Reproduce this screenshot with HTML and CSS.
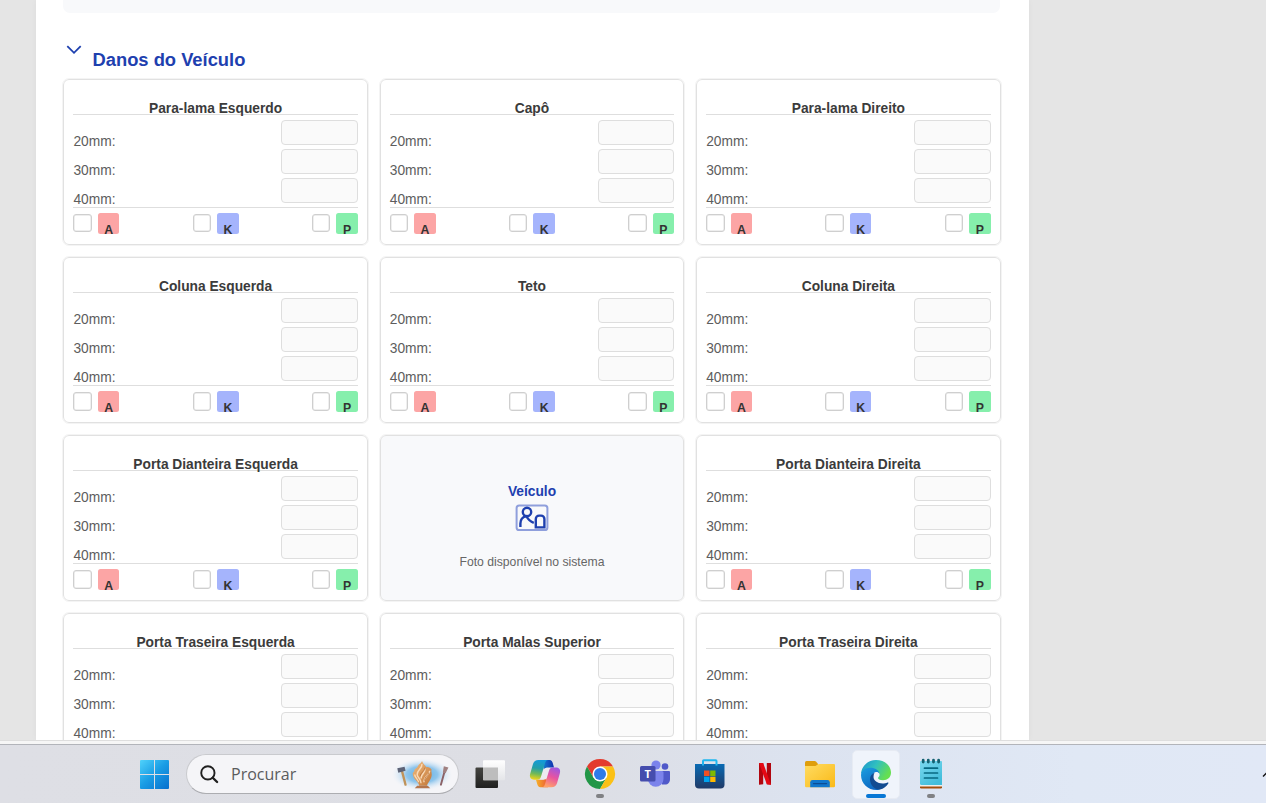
FILE: index.html
```html
<!DOCTYPE html>
<html lang="pt-BR">
<head>
<meta charset="utf-8">
<title>Danos do Veículo</title>
<link rel="stylesheet" href="styles.css">
</head>
<body>
<div class="screen">
  <div class="viewport">
    <main class="sheet">
      <div class="previous-panel"></div>
      <header class="section-head">
        <svg class="chevron" viewBox="0 0 16 10"><path d="M1.3 1.2 8 7.8 14.7 1.2"/></svg>
        <h2>Danos do Veículo</h2>
      </header>
      <div class="grid">
        <section class="card">
          <h3>Para-lama Esquerdo</h3>
          <div class="rows">
            <div class="row"><label>20mm:</label><span class="field"></span></div>
            <div class="row"><label>30mm:</label><span class="field"></span></div>
            <div class="row"><label>40mm:</label><span class="field"></span></div>
          </div>
          <div class="flags">
            <span class="flag"><i class="check"></i><b class="tag a">A</b></span>
            <span class="flag"><i class="check"></i><b class="tag k">K</b></span>
            <span class="flag"><i class="check"></i><b class="tag p">P</b></span>
          </div>
        </section>
        <section class="card">
          <h3>Capô</h3>
          <div class="rows">
            <div class="row"><label>20mm:</label><span class="field"></span></div>
            <div class="row"><label>30mm:</label><span class="field"></span></div>
            <div class="row"><label>40mm:</label><span class="field"></span></div>
          </div>
          <div class="flags">
            <span class="flag"><i class="check"></i><b class="tag a">A</b></span>
            <span class="flag"><i class="check"></i><b class="tag k">K</b></span>
            <span class="flag"><i class="check"></i><b class="tag p">P</b></span>
          </div>
        </section>
        <section class="card">
          <h3>Para-lama Direito</h3>
          <div class="rows">
            <div class="row"><label>20mm:</label><span class="field"></span></div>
            <div class="row"><label>30mm:</label><span class="field"></span></div>
            <div class="row"><label>40mm:</label><span class="field"></span></div>
          </div>
          <div class="flags">
            <span class="flag"><i class="check"></i><b class="tag a">A</b></span>
            <span class="flag"><i class="check"></i><b class="tag k">K</b></span>
            <span class="flag"><i class="check"></i><b class="tag p">P</b></span>
          </div>
        </section>
        <section class="card">
          <h3>Coluna Esquerda</h3>
          <div class="rows">
            <div class="row"><label>20mm:</label><span class="field"></span></div>
            <div class="row"><label>30mm:</label><span class="field"></span></div>
            <div class="row"><label>40mm:</label><span class="field"></span></div>
          </div>
          <div class="flags">
            <span class="flag"><i class="check"></i><b class="tag a">A</b></span>
            <span class="flag"><i class="check"></i><b class="tag k">K</b></span>
            <span class="flag"><i class="check"></i><b class="tag p">P</b></span>
          </div>
        </section>
        <section class="card">
          <h3>Teto</h3>
          <div class="rows">
            <div class="row"><label>20mm:</label><span class="field"></span></div>
            <div class="row"><label>30mm:</label><span class="field"></span></div>
            <div class="row"><label>40mm:</label><span class="field"></span></div>
          </div>
          <div class="flags">
            <span class="flag"><i class="check"></i><b class="tag a">A</b></span>
            <span class="flag"><i class="check"></i><b class="tag k">K</b></span>
            <span class="flag"><i class="check"></i><b class="tag p">P</b></span>
          </div>
        </section>
        <section class="card">
          <h3>Coluna Direita</h3>
          <div class="rows">
            <div class="row"><label>20mm:</label><span class="field"></span></div>
            <div class="row"><label>30mm:</label><span class="field"></span></div>
            <div class="row"><label>40mm:</label><span class="field"></span></div>
          </div>
          <div class="flags">
            <span class="flag"><i class="check"></i><b class="tag a">A</b></span>
            <span class="flag"><i class="check"></i><b class="tag k">K</b></span>
            <span class="flag"><i class="check"></i><b class="tag p">P</b></span>
          </div>
        </section>
        <section class="card">
          <h3>Porta Dianteira Esquerda</h3>
          <div class="rows">
            <div class="row"><label>20mm:</label><span class="field"></span></div>
            <div class="row"><label>30mm:</label><span class="field"></span></div>
            <div class="row"><label>40mm:</label><span class="field"></span></div>
          </div>
          <div class="flags">
            <span class="flag"><i class="check"></i><b class="tag a">A</b></span>
            <span class="flag"><i class="check"></i><b class="tag k">K</b></span>
            <span class="flag"><i class="check"></i><b class="tag p">P</b></span>
          </div>
        </section>
        <section class="card photo">
          <strong>Veículo</strong>
          <svg class="photo-icon" viewBox="0 0 34 28" fill="none" stroke="#1e40af">
            <rect x="1.6" y="1.400" width="30.800" height="24.600" rx="2.600" stroke="#8f9fdc" stroke-width="2"/>
            <g stroke-width="2.400">
              <circle cx="12" cy="8" r="4.200"/>
              <path d="M5.400 23v-3.400c0-4 2.300-6.600 6-7.400 1.700 3.200 4 5.400 7.400 6.600"/>
              <path d="M20.800 23.400v-8.400c0-2 1.500-3.400 3.300-3.400h2c1.800 0 3.300 1.400 3.300 3.400v8.400z"/>
            </g>
          </svg>
          <span>Foto disponível no sistema</span>
        </section>
        <section class="card">
          <h3>Porta Dianteira Direita</h3>
          <div class="rows">
            <div class="row"><label>20mm:</label><span class="field"></span></div>
            <div class="row"><label>30mm:</label><span class="field"></span></div>
            <div class="row"><label>40mm:</label><span class="field"></span></div>
          </div>
          <div class="flags">
            <span class="flag"><i class="check"></i><b class="tag a">A</b></span>
            <span class="flag"><i class="check"></i><b class="tag k">K</b></span>
            <span class="flag"><i class="check"></i><b class="tag p">P</b></span>
          </div>
        </section>
        <section class="card">
          <h3>Porta Traseira Esquerda</h3>
          <div class="rows">
            <div class="row"><label>20mm:</label><span class="field"></span></div>
            <div class="row"><label>30mm:</label><span class="field"></span></div>
            <div class="row"><label>40mm:</label><span class="field"></span></div>
          </div>
        </section>
        <section class="card">
          <h3>Porta Malas Superior</h3>
          <div class="rows">
            <div class="row"><label>20mm:</label><span class="field"></span></div>
            <div class="row"><label>30mm:</label><span class="field"></span></div>
            <div class="row"><label>40mm:</label><span class="field"></span></div>
          </div>
        </section>
        <section class="card">
          <h3>Porta Traseira Direita</h3>
          <div class="rows">
            <div class="row"><label>20mm:</label><span class="field"></span></div>
            <div class="row"><label>30mm:</label><span class="field"></span></div>
            <div class="row"><label>40mm:</label><span class="field"></span></div>
          </div>
        </section>
      </div>
    </main>
  </div>
  <div class="window-edge"></div>
  <nav class="taskbar">
    <svg class="start" viewBox="0 0 29 29">
      <defs><linearGradient id="win" gradientUnits="userSpaceOnUse" x1="0" y1="0" x2="27" y2="29"><stop offset="0" stop-color="#50d2fb"/><stop offset=".5" stop-color="#199de5"/><stop offset="1" stop-color="#0872cf"/></linearGradient></defs>
      <path fill="url(#win)" d="M1 0h13v14H0V1q0-1 1-1zM15 0h13q1 0 1 1v13H15zM0 15h14v14H1q-1 0-1-1zM15 15h14v13q0 1-1 1H15z"/>
    </svg>
    <div class="search">
      <svg class="lens" viewBox="0 0 20 20" fill="none" stroke="#202020"><circle cx="8.300" cy="8.300" r="7" stroke-width="2"/><path d="m13.400 13.400 4.600 4.500" stroke-width="2.500" stroke-linecap="round"/></svg>
      <span>Procurar</span>
      <svg class="highlight" viewBox="0 0 64 34">
        <defs>
          <radialGradient id="glow"><stop offset="0" stop-color="#5aabe2"/><stop offset=".5" stop-color="#8ec5ec"/><stop offset="1" stop-color="#f2f5fa" stop-opacity="0"/></radialGradient>
          <linearGradient id="wood" x2="1" y2="1"><stop offset="0" stop-color="#f3bd80"/><stop offset="1" stop-color="#c17636"/></linearGradient>
        </defs>
        <ellipse cx="32" cy="17" rx="32" ry="17" fill="url(#glow)"/>
        <path d="m11.500 14 3.500 13.500" stroke="#c0935a" stroke-width="2.400" stroke-linecap="round"/>
        <path d="m6.500 10.500 7.500-1.500 1 4-7.500 2.200z" fill="#5d6377"/>
        <path d="m55 15-3.500 12.500" stroke="#8b6267" stroke-width="2" stroke-linecap="round"/>
        <path d="m54.500 8.500 4.800 1.200-3 6-2.800-.8z" fill="#a08080"/>
        <path d="M32 3c1 3 3 4 4.500 6.500 2-.5 4 .500 5.500 2.500-1.200 2 1 4-.5 8-1.500 4-3.500 5.500-4.500 8.500h-8c0-3-3.500-5-5.500-8.500-1.500-3-1.500-5 .5-6-.5-2.500 2-3 3.500-5C28 6.500 31 6 32 3z" fill="url(#wood)"/>
        <path d="M32 6c.5 5-5 6-5 11 0 3 4 4 4 9m4-15c1 4-4 5-4 10m9-8c0 5-6 5-6 12M24.500 17c0 3 3 4 4 8" fill="none" stroke="#ffe9cd" stroke-width="1.500" stroke-opacity=".8"/>
        <path d="M35 10c0 4-5 5-5 9m9-4c0 3-5 4-4 9" fill="none" stroke="#b56b31" stroke-width=".8"/>
        <path d="M27 28.500h11l2.500 2.700H24.500z" fill="#b4754c"/>
      </svg>
    </div>
    <div class="apps">
      <span class="app">
        <svg width="32" height="32" viewBox="0 0 32 32">
          <defs><linearGradient id="dk" x2="0" y2="1"><stop offset="0" stop-color="#444440"/><stop offset="1" stop-color="#202020"/></linearGradient><linearGradient id="lt" x2="0" y2="1"><stop offset="0" stop-color="#fff"/><stop offset="1" stop-color="#e4e5e8"/></linearGradient></defs>
          <rect x="1.500" y="9.500" width="22.500" height="20.500" rx="1" fill="url(#dk)"/>
          <rect x="9" y="2.200" width="22" height="20" rx="1" fill="url(#lt)"/>
          <path d="M9 9.500h15v12.700H9z" fill="#bdbdbd"/>
        </svg>
      </span>
      <span class="app">
        <svg width="32" height="32" viewBox="0 0 32 32">
          <defs>
            <linearGradient id="cp1" x1=".4" x2=".25" y2="1"><stop offset="0" stop-color="#149ad8"/><stop offset=".4" stop-color="#239fa8"/><stop offset=".7" stop-color="#72b957"/><stop offset="1" stop-color="#f4d516"/></linearGradient>
            <linearGradient id="cp2" x1=".8" x2=".4" y2="1"><stop offset="0" stop-color="#9a58e4"/><stop offset=".5" stop-color="#e854a0"/><stop offset="1" stop-color="#ffa269"/></linearGradient>
            <linearGradient id="cp3" x2="1"><stop offset="0" stop-color="#1784d3"/><stop offset="1" stop-color="#102fae"/></linearGradient>
            <linearGradient id="cp4" x2="1"><stop offset="0" stop-color="#f6b328"/><stop offset="1" stop-color="#ec5935"/></linearGradient>
          </defs>
          <path d="M13 2h7.500c2 0 2.800 1.500 3.300 3.200l1.200 4.300h-7.500L15 12z" fill="url(#cp3)"/>
          <path d="M19 29.200h-7.500c-2 0-2.800-1.500-3.300-3.200L7 21.700h7.500L17 19z" fill="url(#cp4)"/>
          <path d="M18 10h3l-2.700 9c-.5 1.700-1.300 2.500-2.800 2.500H11l3.200-9.300c.6-1.600 1.600-2.200 3.800-2.200z" fill="#eceaf0"/>
          <path d="M9.500 2H19c-1.700 0-2.500 1.500-3 3.200L12 18.500c-.7 2.200-1.800 3.200-4 3.200H5c-3.500 0-4.800-2.500-3.800-6L4 6c.9-2.700 2.600-4 5.500-4z" fill="url(#cp1)"/>
          <path d="M22.500 29.200H13c1.700 0 2.500-1.500 3-3.200l4-13.300c.7-2.200 1.800-3.200 4-3.200h3c3.500 0 4.800 2.500 3.800 6L28 25.200c-.9 2.700-2.600 4-5.500 4z" fill="url(#cp2)"/>
        </svg>
      </span>
      <span class="app running">
        <svg width="32" height="32" viewBox="-16 -16 32 32">
          <path d="M0-7.500h13A15 15 0 0 0-13-7.500L-6.500 3.750z" fill="#e33b2e"/>
          <path d="M-6.500 3.750-13-7.500A15 15 0 0 0 0 15L6.500 3.750z" fill="#229647"/>
          <path d="M6.500 3.750 0 15A15 15 0 0 0 13-7.500H0z" fill="#fbc116"/>
          <circle r="7.500" fill="#fff"/><circle r="6" fill="#2f7bea"/>
        </svg>
      </span>
      <span class="app">
        <svg width="32" height="32" viewBox="0 0 32 32">
          <circle cx="17" cy="7" r="4.600" fill="#7b83eb"/><circle cx="26" cy="8.500" r="3.300" fill="#5059c9"/>
          <path d="M21 13h9q1 0 1 1v7c0 3.500-2 5.500-5 5.500h-3z" fill="#5059c9"/>
          <path d="M9 13h14q1.500 0 1.500 1.500V21a7.700 7.700 0 0 1-15.500 0z" fill="#7b83eb"/>
          <rect x="1" y="8" width="15.500" height="15.500" rx="1.500" fill="#454dad"/>
          <text x="8.700" y="19.600" class="teams-letter">T</text>
        </svg>
      </span>
      <span class="app">
        <svg width="32" height="32" viewBox="0 0 32 32">
          <defs><linearGradient id="st" x2="0" y2="1"><stop offset="0" stop-color="#096bb4"/><stop offset="1" stop-color="#203a67"/></linearGradient></defs>
          <path d="M1 6h29.500v20.500q0 4-4 4H5q-4 0-4-4z" fill="url(#st)"/>
          <path d="M9 7.500V3q0-.8.8-.8h11.900q.8 0 .8.800v4.500" fill="none" stroke="#20b7ef" stroke-width="2"/>
          <path d="M10 12.500h5.500V18H10z" fill="#f25022"/><path d="M16.200 12.500h5.300V18h-5.300z" fill="#7fba00"/><path d="M10 18.700h5.500V24H10z" fill="#00a4ef"/><path d="M16.200 18.700h5.300V24h-5.300z" fill="#ffb900"/>
        </svg>
      </span>
      <span class="app">
        <svg width="32" height="32" viewBox="0 0 32 32">
          <path d="M10 5h4.200v21.300l-4.200.5zM17.800 5H22v21.800l-4.200-.5z" fill="#b1060f"/>
          <path d="M10 5h4.200L22 26.800l-4.200-.5z" fill="#e50914"/>
        </svg>
      </span>
      <span class="app">
        <svg width="32" height="32" viewBox="0 0 32 32">
          <defs><linearGradient id="fo" x2="1" y2="1"><stop offset="0" stop-color="#ffdc62"/><stop offset="1" stop-color="#fab917"/></linearGradient></defs>
          <path d="M1 9V4.500Q1 3 2.500 3h8q1 0 1.700.8L14 5.900V9z" fill="#df9e0b"/>
          <path d="M1 8h9.500q1 0 1.800-.6l1.300-.9q.6-.5 1.500-.5H30q1 0 1 1V28q0 1.300-1.200 1.300H2.200Q1 29.300 1 28z" fill="url(#fo)"/>
          <path d="M6.200 29.300v-5q0-2.300 2.300-2.300h15q2.300 0 2.300 2.300v5z" fill="#1077cd"/>
          <path d="M9.500 25.600h13" stroke="#0b4c94" stroke-width="1.300" stroke-linecap="round"/>
        </svg>
      </span>
      <span class="app active">
        <svg width="32" height="32" viewBox="0 0 32 32">
          <defs>
            <linearGradient id="e1" x2="1" y2=".45"><stop offset="0" stop-color="#1b91ce"/><stop offset=".5" stop-color="#30bfc0"/><stop offset="1" stop-color="#65df51"/></linearGradient>
            <linearGradient id="e2" x2=".5" y2="1"><stop offset="0" stop-color="#1b9ee0"/><stop offset="1" stop-color="#0e68c2"/></linearGradient>
          </defs>
          <path d="M1 15C1.500 7 8 1 16 1c9 0 15 6 15 12.500 0 5-3.600 7.700-8 7.700-3.400 0-5-1-5-2.200 0-1 1.600-1.300 1.600-3.300 0-2.200-2.200-4.200-5.600-4.200-6 0-11 .5-13 3.500z" fill="url(#e1)"/>
          <path d="M1 16c.3-5 5.200-7.800 10.500-7.300 4.200.3 7.500 3 8 6-.9-1.300-2.200-2-3.500-1.700-2.500.5-4.500 3.500-4.500 6.500 0 5.500 4.500 10.500 9 11.200-1.200.3-2.500.4-4 .4-8.500 0-15.500-6.700-15.500-15.100z" fill="url(#e2)"/>
          <path d="M14.500 13.800c-2.800 1-4.500 3.500-4.500 6.500 0 6 4.800 10.700 10 10.300 3.500-.8 6.700-3.300 8.300-6.100.4-.8-.2-1.200-.9-.9-1.200.6-3 1-4.900 1-5 0-9-3-9-6.500 0-1.500.3-2.900 1-4.300z" fill="#124b91"/>
        </svg>
      </span>
      <span class="app running">
        <svg width="32" height="32" viewBox="0 0 32 32">
          <defs><linearGradient id="np" x2=".6" y2="1"><stop offset="0" stop-color="#7cd9ef"/><stop offset="1" stop-color="#42bddb"/></linearGradient></defs>
          <path d="M5 25h22v4.200q0 1.300-1.300 1.300H6.300Q5 30.500 5 29.200z" fill="#a34e0c"/>
          <path d="M5 25h22v3.500H5z" fill="#f1eee9"/>
          <path d="M6 3h20q1 0 1 1v23H6.500Q5 27 5 25.500V4q0-1 1-1z" fill="url(#np)"/>
          <path d="M9.500 10.200h13M9.500 15h13M9.500 20h13" stroke="#076982" stroke-width="1.700" stroke-linecap="round"/>
          <path d="M8.200 2.200v1.800M13.300 2.200v1.800M18.500 2.200v1.800M23.600 2.200v1.800" stroke="#146171" stroke-width="2.800" stroke-linecap="round"/>
        </svg>
      </span>
    </div>
    <svg class="tray" viewBox="0 0 10 7"><path d="m1 5.500 4-4 4 4" fill="none" stroke="#111" stroke-width="1.400"/></svg>
  </nav>
</div>
</body>
</html>
```
FILE: styles.css
```css
* { box-sizing: border-box; }
body { margin: 0; font-family: "Liberation Sans", Arial, sans-serif; }
.screen { width: 1266px; height: 803px; overflow: hidden; display: flex; flex-direction: column; }
.viewport { height: 740px; flex: none; overflow: hidden; background: #e5e5e5; }
.sheet { width: 993px; height: 740px; margin-left: 36px; padding: 0 28.700px 0 27.400px; background: #fff; box-shadow: 0 0 6px rgba(0,0,0,.04); }
.previous-panel { height: 13px; background: #f8f9fb; border-radius: 0 0 7px 7px; }
.section-head { height: 66px; display: flex; align-items: flex-start; padding: 32px 0 0 2.600px; }
.chevron { width: 16px; height: 10px; margin-right: 10.500px; fill: none; stroke: #1e40af; stroke-width: 1.800; }
h2 { margin: 4px 0 0; font-size: 18.350px; line-height: 22px; color: #1e40af; }
.grid { display: grid; grid-template-columns: repeat(3, 304.400px); grid-auto-rows: 165.600px; gap: 12.500px 12px; }
.card { border: 1px solid #e1e1e1; outline: .5px solid #f4f4f4; border-radius: 6px; background: #fff; padding: 0 9px; display: flex; flex-direction: column; }
h3 { margin: 0; height: 35px; padding-top: 21.700px; border-bottom: 1px solid #dedede; font-size: 13.780px; line-height: 14px; text-align: center; color: #3b3b3b; }
.rows { display: flex; flex-direction: column; gap: 4.500px; padding: 5px 0 4.500px; }
.row { height: 24.500px; display: flex; justify-content: space-between; align-items: flex-start; }
label { padding-top: 13.700px; font-size: 13.780px; line-height: 16px; color: #5d5d5d; }
.field { width: 76.500px; height: 24.500px; background: #fafafa; border: 1px solid #dedede; border-radius: 4px; }
.flags { display: flex; justify-content: space-between; padding-top: 4.600px; border-top: 1px solid #dedede; }
.flag { display: flex; align-items: center; gap: 6px; }
.check { width: 18.500px; height: 18.500px; border: 1px solid #cfcfcf; border-radius: 3px; box-shadow: inset 0 0 0 .5px #dedede; }
.tag { width: 21.500px; height: 21.300px; padding-top: 10.200px; border-radius: 2.500px; font-size: 12.300px; line-height: 15px; text-align: center; color: #333; }
.a { background: #fca5a5; }
.k { background: #a5b4fc; }
.p { background: #86efac; }
.photo { background: #f8f9fb; align-items: center; padding-top: 47px; }
.photo strong { font-size: 13.780px; line-height: 17px; color: #1e40af; }
.photo-icon { width: 34px; height: 28px; margin-top: 4px; }
.photo span { margin-top: 21.800px; font-size: 12.200px; line-height: 16px; color: #666; }
.window-edge { height: 5px; flex: none; background: #f6f6f6; border-top: 1px solid #dedede; border-bottom: 1px solid #b2b4ba; }
.taskbar { flex: 1; display: flex; align-items: center; padding-left: 140px; background: linear-gradient(90deg, #dedfe5 0, #dddee4 45%, #dce3f0 64%, #e0e8f5 85%, #e1e8f6 100%); overflow: hidden; }
.start { width: 29px; height: 29px; flex: none; margin-top: 1px; }
.search { width: 273.500px; height: 40px; flex: none; margin: 0 3.700px 0 16.500px; padding-left: 13px; display: flex; align-items: center; border-radius: 20px; background: #f5f5f8; border: 1px solid #c9cace; border-bottom-color: #acadb1; }
.lens { width: 19px; height: 19px; flex: none; }
.search span { flex: 1; margin-left: 12.500px; font-family: "Open Sans", "Noto Sans", sans-serif; font-size: 16px; color: #5b5b5d; }
.highlight { width: 62px; height: 33px; margin-right: 5.500px; }
.apps { display: flex; flex: none; }
.app { width: 55.050px; height: 58px; flex: none; padding-top: 13px; display: flex; flex-direction: column; align-items: center; }
.running::after { content: ""; width: 8px; height: 4px; margin-top: 4px; border-radius: 2px; background: #808184; }
.active { width: 48px; height: 49px; margin: 4.500px 3.525px; padding-top: 8px; border: 1px solid #e7ebf3; border-radius: 5px; background: #f0f4fb; }
.active::after { content: ""; width: 20px; height: 4px; margin-top: 3px; flex: none; border-radius: 2px; background: #0877d5; }
.active svg, .running svg { flex: none; }
.teams-letter { font: bold 11px "Open Sans", sans-serif; fill: #fff; text-anchor: middle; }
.tray { width: 10px; height: 7px; flex: none; margin-left: 304px; }
```
